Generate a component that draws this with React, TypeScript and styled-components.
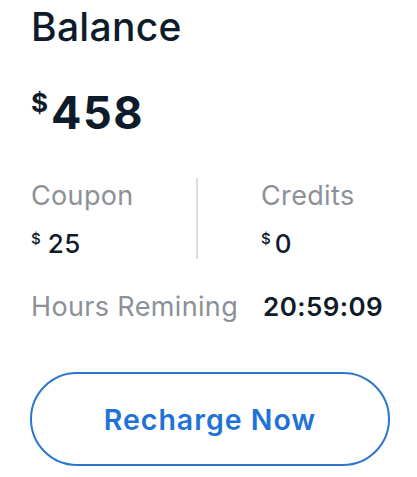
import React from "react";
import styled, { createGlobalStyle } from "styled-components";

const Global = createGlobalStyle`
  html, body { margin: 0; padding: 0; background: #ffffff; }
  body { font-family: Inter, "Noto Sans", sans-serif; }
`;

const Card = styled.div`
  width: 417px;
  height: 477px;
  box-sizing: border-box;
  padding: 7px 27px 0 31px;
  display: flex;
  flex-direction: column;
  color: #0d1b2a;
`;

const Title = styled.h1`
  margin: 0;
  font-size: 39px;
  font-weight: 500;
  line-height: 40px;
  letter-spacing: 0.3px;
`;

const Amount = styled.div`
  margin-top: 43px;
  display: flex;
  align-items: flex-start;
  font-weight: 700;
`;

const Currency = styled.span<{ $size: number; $gap: number; $weight: number }>`
  font-size: ${(p) => p.$size}px;
  font-weight: ${(p) => p.$weight};
  line-height: 1;
  margin-right: ${(p) => p.$gap}px;
`;

const BigValue = styled.span`
  font-size: 45px;
  line-height: 45px;
  letter-spacing: 1.5px;
`;

const Stats = styled.div`
  margin-top: 43px;
  display: grid;
  grid-template-columns: 165px 2px 1fr;
  height: 81px;
`;

const StatCol = styled.div<{ $pad: number }>`
  display: flex;
  flex-direction: column;
  padding-left: ${(p) => p.$pad}px;
  padding-top: 4px;
`;

const Divider = styled.div`
  background: #dedede;
  width: 1.5px;
`;

const Label = styled.div`
  font-size: 27px;
  line-height: 28px;
  color: #8b9196;
  font-weight: 400;
  letter-spacing: 0.35px;
`;

const SmallValue = styled.div`
  margin-top: 21px;
  display: flex;
  align-items: flex-start;
`;

const SmallNum = styled.span`
  font-size: 26px;
  line-height: 26px;
  font-weight: 500;
  letter-spacing: 0.5px;
`;

const TimeRow = styled.div`
  margin-top: 34px;
  display: flex;
  align-items: flex-start;
  justify-content: space-between;
  padding-right: 7px;
`;

const Time = styled.span`
  font-size: 26px;
  line-height: 28px;
  font-weight: 600;
  letter-spacing: 0.4px;
`;

const Button = styled.button`
  margin-top: 51px;
  margin-left: -1px;
  width: 360px;
  height: 94px;
  box-sizing: border-box;
  border: 2px solid #2b76cc;
  border-radius: 47px;
  background: #ffffff;
  color: #1f72d8;
  font-family: Inter, "Noto Sans", sans-serif;
  font-size: 28.5px;
  font-weight: 600;
  letter-spacing: 1px;
  padding: 0;
  cursor: pointer;
`;

export default function App() {
  return (
    <>
      <Global />
      <Card>
        <Title>Balance</Title>
        <Amount>
          <Currency $size={26} $gap={3} $weight={700}>$</Currency>
          <BigValue>458</BigValue>
        </Amount>
        <Stats>
          <StatCol $pad={0}>
            <Label>Coupon</Label>
            <SmallValue>
              <Currency $size={15} $gap={7} $weight={500}>$</Currency>
              <SmallNum>25</SmallNum>
            </SmallValue>
          </StatCol>
          <Divider />
          <StatCol $pad={63}>
            <Label>Credits</Label>
            <SmallValue>
              <Currency $size={15} $gap={4} $weight={500}>$</Currency>
              <SmallNum>0</SmallNum>
            </SmallValue>
          </StatCol>
        </Stats>
        <TimeRow>
          <Label>Hours Remining</Label>
          <Time>20:59:09</Time>
        </TimeRow>
        <Button>Recharge Now</Button>
      </Card>
    </>
  );
}
